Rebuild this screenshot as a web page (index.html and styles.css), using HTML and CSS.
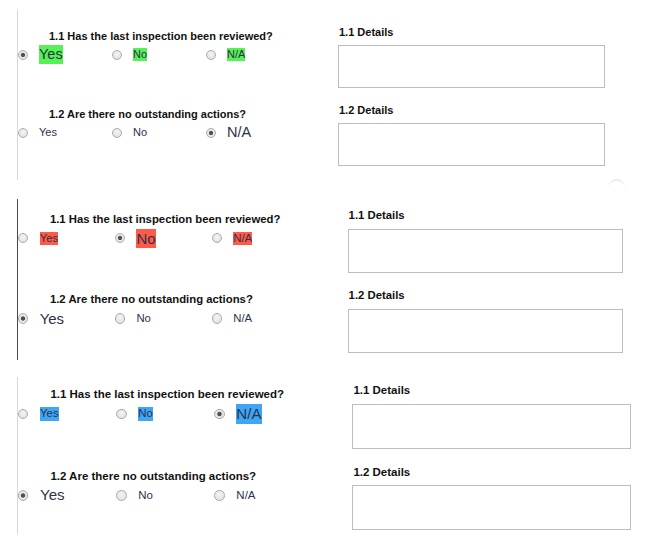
FILE: index.html
```html
<!DOCTYPE html>
<html>
<head>
<meta charset="utf-8" />
<title>Inspection checklist</title>
<link rel="stylesheet" href="styles.css">
</head>

<body>
	<div class="panel panel-first">
		<div class="panel-body">
			<div class="questions">
				<div class="question">
					<div class="question-title">1.1 Has the last inspection been reviewed?</div>
					<div class="options options-green">
						<label class="option"><input type="radio" name="a1" checked><span class="answer">Yes</span></label>
						<label class="option"><input type="radio" name="a1"><span class="answer">No</span></label>
						<label class="option"><input type="radio" name="a1"><span class="answer">N/A</span></label>
					</div>
				</div>
				<div class="question">
					<div class="question-title">1.2 Are there no outstanding actions?</div>
					<div class="options">
						<label class="option"><input type="radio" name="a2"><span class="answer">Yes</span></label>
						<label class="option"><input type="radio" name="a2"><span class="answer">No</span></label>
						<label class="option"><input type="radio" name="a2" checked><span class="answer">N/A</span></label>
					</div>
				</div>
			</div>
			<div class="details">
				<div class="details-label">1.1 Details</div>
				<textarea></textarea>
				<div class="details-label">1.2 Details</div>
				<textarea></textarea>
			</div>
		</div>
		<span class="spinner"></span>
	</div>

	<div class="panel panel-second">
		<div class="panel-body">
			<div class="questions">
				<div class="question">
					<div class="question-title">1.1 Has the last inspection been reviewed?</div>
					<div class="options options-red">
						<label class="option"><input type="radio" name="b1"><span class="answer">Yes</span></label>
						<label class="option"><input type="radio" name="b1" checked><span class="answer">No</span></label>
						<label class="option"><input type="radio" name="b1"><span class="answer">N/A</span></label>
					</div>
				</div>
				<div class="question">
					<div class="question-title">1.2 Are there no outstanding actions?</div>
					<div class="options">
						<label class="option"><input type="radio" name="b2" checked><span class="answer">Yes</span></label>
						<label class="option"><input type="radio" name="b2"><span class="answer">No</span></label>
						<label class="option"><input type="radio" name="b2"><span class="answer">N/A</span></label>
					</div>
				</div>
			</div>
			<div class="details">
				<div class="details-label">1.1 Details</div>
				<textarea></textarea>
				<div class="details-label">1.2 Details</div>
				<textarea></textarea>
			</div>
		</div>
	</div>

	<div class="panel panel-third">
		<div class="panel-body">
			<div class="questions">
				<div class="question">
					<div class="question-title">1.1 Has the last inspection been reviewed?</div>
					<div class="options options-blue">
						<label class="option"><input type="radio" name="c1"><span class="answer">Yes</span></label>
						<label class="option"><input type="radio" name="c1"><span class="answer">No</span></label>
						<label class="option"><input type="radio" name="c1" checked><span class="answer">N/A</span></label>
					</div>
				</div>
				<div class="question">
					<div class="question-title">1.2 Are there no outstanding actions?</div>
					<div class="options">
						<label class="option"><input type="radio" name="c2" checked><span class="answer">Yes</span></label>
						<label class="option"><input type="radio" name="c2"><span class="answer">No</span></label>
						<label class="option"><input type="radio" name="c2"><span class="answer">N/A</span></label>
					</div>
				</div>
			</div>
			<div class="details">
				<div class="details-label">1.1 Details</div>
				<textarea></textarea>
				<div class="details-label">1.2 Details</div>
				<textarea></textarea>
			</div>
		</div>
	</div>
</body>
</html>
```

FILE: styles.css
```css
body{
	margin:0;
	padding-top:10px;
	font-family:"Liberation Sans", Arial, sans-serif;
	background:#ffffff;
}

.panel{
	position:relative;
	margin-left:17px;
	border-left:1px solid #d9d9d9;
}

.panel-first{
	padding:16px 0 14px;
}

.panel-second{
	margin-top:19px;
	padding:10px 0 7px;
	border-left-color:#4a4a4a;
}

.panel-second .panel-body{
	zoom:1.03;
}

.panel-third{
	margin-top:17px;
	padding:7px 0 4px;
}

.panel-third .panel-body{
	zoom:1.045;
}

.panel-body{
	display:flex;
}

.questions{
	width:320px;
	padding-top:4px;
}

.question{
	margin-bottom:44px;
}

.question:last-child{
	margin-bottom:0;
}

.question-title{
	padding-left:31px;
	margin-bottom:2px;
	font-size:11px;
	line-height:13px;
	font-weight:bold;
	color:#111111;
}

.options{
	display:flex;
	height:19px;
}

.option{
	width:94px;
	display:flex;
	align-items:center;
	gap:11px;
}

.option input{
	appearance:none;
	-webkit-appearance:none;
	box-sizing:border-box;
	width:10px;
	height:10px;
	margin:0;
	border:1px solid #acacac;
	border-radius:50%;
	background:radial-gradient(circle at 50% 40%, #f4f4f4, #dcdcdc);
}

.option input:checked{
	background:radial-gradient(circle, #4f4f4f 0, #4f4f4f 1.7px, #e6e6e6 2.5px);
}

.answer{
	font-size:11px;
	line-height:13px;
	color:#2e3149;
}

.option input:checked + .answer{
	font-size:14.5px;
	line-height:19px;
}

.options-green .answer{
	background:#55f255;
}

.options-red .answer{
	background:#ff5a47;
}

.options-blue .answer{
	background:#3ea6f5;
}

.details{
	width:267px;
}

.details-label{
	font-size:11px;
	line-height:13px;
	font-weight:bold;
	color:#111111;
	margin-bottom:6px;
	padding-left:1px;
}

.details textarea{
	display:block;
	box-sizing:border-box;
	width:267px;
	height:43px;
	margin:0 0 16px;
	border:1px solid #bdbdbd;
	resize:none;
	background:#ffffff;
}

.details textarea:last-child{
	margin-bottom:0;
}

.spinner{
	position:absolute;
	left:590px;
	top:169px;
	width:17px;
	height:17px;
	box-sizing:border-box;
	border-radius:50%;
	border-top:2px solid #ececec;
}
```
